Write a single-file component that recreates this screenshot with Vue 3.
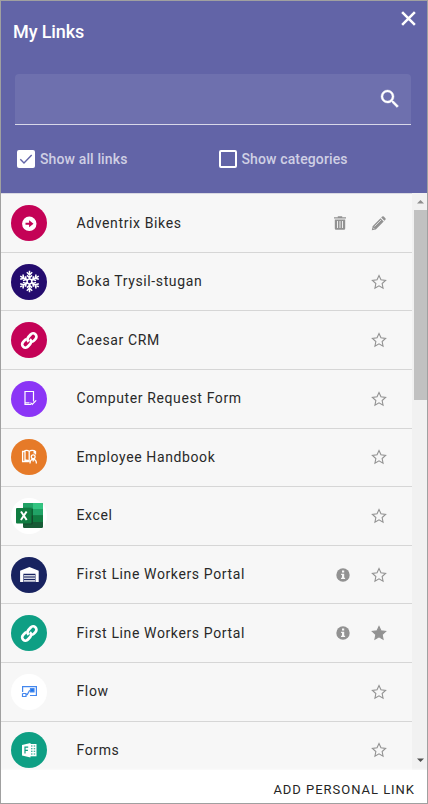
<script setup>
import { ref } from 'vue'

const query = ref('')
const links = [
  { name: 'Adventrix Bikes', icon: 'arrow', color: '#c40256', own: true },
  { name: 'Boka Trysil-stugan', icon: 'snow', color: '#240c6e' },
  { name: 'Caesar CRM', icon: 'chain', color: '#c40256' },
  { name: 'Computer Request Form', icon: 'request', color: '#8b35f6' },
  { name: 'Employee Handbook', icon: 'handbook', color: '#e67a28' },
  { name: 'Excel', icon: 'excel', color: '#ffffff' },
  { name: 'First Line Workers Portal', icon: 'garage', color: '#182360', info: true },
  { name: 'First Line Workers Portal', icon: 'chain', color: '#0e9f84', info: true, starred: true },
  { name: 'Flow', icon: 'flow', color: '#ffffff' },
  { name: 'Forms', icon: 'forms', color: '#0e9f84' },
]
</script>

<template>
  <div class="panel">
    <header class="header">
      <div class="title-row">
        <h1>My Links</h1>
        <svg class="close" viewBox="0 0 16 16"><path d="M2 2 14 14M14 2 2 14" /></svg>
      </div>
      <div class="search">
        <input v-model="query" type="text" />
        <svg viewBox="0 0 24 24"><path d="M15.5 14h-.79l-.28-.27A6.47 6.47 0 0 0 16 9.5 6.5 6.5 0 1 0 9.5 16c1.61 0 3.09-.59 4.23-1.57l.27.28v.79l5 4.99L20.49 19l-4.99-5zm-6 0C7.01 14 5 11.99 5 9.5S7.01 5 9.5 5 14 7.01 14 9.5 11.99 14 9.5 14z" /></svg>
      </div>
      <div class="options">
        <label><span class="box checked"><svg viewBox="0 0 18 18"><path d="M3.3 9.2 7 12.9 14.7 5" /></svg></span>Show all links</label>
        <label><span class="box"></span>Show categories</label>
      </div>
    </header>

    <main class="body">
      <ul class="list">
        <li v-for="(link, i) in links" :key="i">
          <span class="avatar" :style="{ background: link.color }">
            <svg viewBox="0 0 36 36">
              <g v-if="link.icon === 'arrow'">
                <circle cx="18.3" cy="18.8" r="7.2" fill="#fff" />
                <path d="M14.5 17.8h3.6v-2.5l4.4 3.500-4.400 3.500v-2.500h-3.600z" :fill="link.color" />
              </g>
              <g v-else-if="link.icon === 'snow'" fill="none" stroke="#fff" stroke-width="1.5">
                <g v-for="a in 6" :key="a" :transform="`rotate(${a * 60} 18.5 17.5)`">
                  <path d="M18.5 15V6.800M15.800 8.300l2.700 2.700 2.700-2.700M16 11.400l2.500 2.300 2.500-2.300" />
                </g>
                <circle cx="18.5" cy="17.5" r="2.4" />
              </g>
              <g v-else-if="link.icon === 'chain'" fill="none" stroke="#fff" stroke-width="2.7" transform="rotate(-48 18.3 18.5)">
                <path d="M17.500 15.800Q16.800 14.900 15.300 14.900h-2.400a3.300 3.300 0 0 0 0 6.600h3.400a3.300 3.300 0 0 0 3.300-3.300" />
                <path d="M19.100 21.200q.7.900 2.200.9h2.400a3.300 3.300 0 0 0 0-6.600h-3.400a3.300 3.300 0 0 0-3.300 3.300" />
              </g>
              <g v-else-if="link.icon === 'request'" fill="none" stroke="#fff" stroke-width="1.2">
                <path d="M20 23.500h-6V10.500h8.500v10M14 21.800h4.500M19.500 21.700l1.700 1.800 4-4.200" />
              </g>
              <g v-else-if="link.icon === 'handbook'" fill="none" stroke="#fff" stroke-width="1.3">
                <path d="M14 12.500h-2.400v10h6.200M14 11.600c2-.6 3.200-.2 4.200.8v9.800c-1.200-.9-2.400-1.200-4.200-.8zM18.200 12.400c1-1 2.800-1.300 5-.8v3M23.200 12.500h1.300v3" />
                <circle cx="22.2" cy="17.8" r="1.9" />
                <path d="M19 24.500c0-5.500 6.400-5.500 6.400 0M22.200 21v1.500" />
              </g>
              <g v-else-if="link.icon === 'excel'">
                <rect x="12" y="5" width="20" height="25" rx="1.2" fill="#185c37" />
                <path d="M12 6.200Q12 5 13.200 5H22v6H12z" fill="#21a366" />
                <path d="M22 5h8.800Q32 5 32 6.200V11H22z" fill="#33c481" />
                <path d="M12 11h10v6.500H12z" fill="#107c41" />
                <path d="M22 11h10v6.500H22z" fill="#21a366" />
                <path d="M22 17.500h10V24H22z" fill="#107c41" />
                <path d="M12 9.500h8.500q1.500 0 1.500 1.500v14q0 1.500-1.500 1.500H12z" fill="#000" opacity=".2" />
                <rect x="5" y="10" width="15.500" height="15.500" rx="1" fill="#107c41" />
                <path d="m10 13.500 5.700 8.500M15.600 13.500 9.900 22" fill="none" stroke="#fff" stroke-width="2" />
              </g>
              <g v-else-if="link.icon === 'garage'" fill="#fff">
                <path d="M9.100 25.100V13.800L18.400 10l9.300 3.800v11.300h-3.200V16.800H12.400v8.300z" />
                <path d="M13 18h11v1.500H13zM13 20.500h11V22H13zM13 23h11v1.700H13z" opacity=".8" />
              </g>
              <g v-else-if="link.icon === 'flow'" fill="none" stroke="#4387ee" stroke-width="1.2">
                <path d="M11.600 18v-5.400h13.800v8.900h-6.400M11.500 19.500v3h3.500v-3h-3.500M15 21.500c2.500 0 1.800-5.200 4.500-5.200" />
                <rect x="19.5" y="14.7" width="3.5" height="3.2" fill="#1976ee" />
              </g>
              <g v-else>
                <path d="M18.500 12h7v12.300h-7z" fill="#fff" />
                <path d="M20 14h1.500M22.700 14h1.500M20 16.700h1.500M22.700 16.700h1.500M20 19.300h1.500M22.700 19.300h1.500M20 22h1.500M22.700 22h1.500" :stroke="link.color" stroke-width="1.1" />
                <path d="m11 13 8.500-2v14.500L11 23.600z" fill="#fff" />
                <path d="M14 21.500v-6.400h3.200M14 18.300h2.900" fill="none" :stroke="link.color" stroke-width="1.2" />
              </g>
            </svg>
          </span>
          <span class="name">{{ link.name }}</span>
          <svg v-if="link.own" class="act trash" viewBox="0 0 16 16">
            <path d="M2 2.200h3.800V1.200h4.400v1H14v1.200H2zM2.800 4.500h10.400v9q0 1.200-1.200 1.200H4q-1.200 0-1.200-1.200z" />
            <path d="M5.500 6v7M8 6v7M10.500 6v7" stroke="#f7f7f7" stroke-width=".9" />
          </svg>
          <svg v-if="link.info" class="act info" viewBox="0 0 16 16">
            <circle cx="8" cy="8" r="6.7" />
            <path d="M7 3.600h2.200v1.900H7zM6.100 6.700h3.100v4h.9v1.400H6v-1.400h1V8.100h-.9z" fill="#f7f7f7" />
          </svg>
          <svg v-if="link.own" class="act" viewBox="0 0 16 16">
            <path d="m10.200 2.600 3.200 3.200 1-1q.8-.8 0-1.600l-1.600-1.600q-.8-.8-1.600 0zM9.500 3.300l3.200 3.200-7.900 7.900-4 .9.800-4.100z" />
            <path d="M3.500 11.500 10 5M2 12.700l1.500 1.500" fill="none" stroke="#f7f7f7" stroke-width=".7" />
          </svg>
          <svg v-else class="act star" :class="{ filled: link.starred }" viewBox="0 0 16 16">
            <path d="m8 1.600 1.950 4.250 4.650.55-3.450 3.150.9 4.600L8 11.850l-4.050 2.300.9-4.600L1.400 6.400l4.650-.55z" />
          </svg>
        </li>
      </ul>
      <div class="scrollbar">
        <svg viewBox="0 0 15 17"><path d="M5 10.500 8.500 7l3.500 3.500z" fill="#8d8d8d" /></svg>
        <span class="thumb"></span>
        <svg viewBox="0 0 15 17"><path d="M5 5.500h7L8.500 9z" fill="#505050" /></svg>
      </div>
    </main>

    <footer class="footer">ADD PERSONAL LINK</footer>
  </div>
</template>

<style>
body {
  overflow: hidden;
}
</style>

<style scoped>
.panel {
  box-sizing: border-box;
  width: 428px;
  height: 804px;
  display: flex;
  flex-direction: column;
  border: 1px solid #a0a0a0;
  background: #fff;
  font-family: Roboto, sans-serif;
  overflow: hidden;
}
.header {
  box-sizing: border-box;
  flex: none;
  height: 192px;
  padding: 8px 10px 0 12px;
  background: #6264a7;
  color: #fff;
}
.title-row {
  display: flex;
  justify-content: space-between;
  height: 65px;
}
h1 {
  margin: 12px 0 0;
  font-size: 18px;
  line-height: 22px;
  font-weight: 500;
  letter-spacing: -.1px;
}
.close {
  width: 17px;
  height: 17px;
  margin-top: .5px;
  fill: none;
  stroke: #fff;
  stroke-width: 2.4;
}
.search {
  box-sizing: border-box;
  display: flex;
  align-items: center;
  width: 396px;
  height: 51px;
  margin-left: 2px;
  padding-right: 9.5px;
  border-bottom: 1px solid #d8d8e9;
  border-radius: 4px 4px 0 0;
  background: #6e70ae;
}
.search input {
  flex: 1;
  min-width: 0;
  border: 0;
  outline: 0;
  background: transparent;
  color: #fff;
}
.search svg {
  width: 24px;
  height: 24px;
  fill: #fff;
  stroke: #fff;
  stroke-width: .4;
}
.options {
  display: grid;
  grid-template-columns: 201.5px 1fr;
  padding: 25px 0 0 4px;
}
label {
  display: flex;
  align-items: center;
  gap: 5px;
  height: 18px;
  font-size: 14px;
  font-weight: 500;
  letter-spacing: .13px;
  color: #cfcfe4;
}
.box {
  box-sizing: border-box;
  width: 18px;
  height: 18px;
  border: 2px solid #fff;
  border-radius: 2px;
}
.checked {
  border: 0;
  background: #fff;
}
.checked svg {
  display: block;
  fill: none;
  stroke: #6264a7;
  stroke-width: 1.4;
}
.body {
  flex: none;
  display: flex;
  height: 577px;
  background: #f7f7f7;
  overflow: hidden;
}
.list {
  flex: 1;
  margin: 0;
  padding: .3px 0 0;
  list-style: none;
  border-top: 1px solid #d9d9e2;
}
li {
  box-sizing: border-box;
  display: flex;
  align-items: center;
  height: 58.58px;
  padding: 0 25px 0 10px;
  border-bottom: 1px solid #d6d6d6;
}
.avatar {
  width: 36px;
  height: 36px;
  border-radius: 50%;
}
.avatar svg {
  display: block;
  width: 36px;
  height: 36px;
}
.name {
  flex: 1;
  margin: 0 0 1px 29.5px;
  font-size: 14px;
  line-height: 20px;
  letter-spacing: .62px;
  color: #292929;
}
.act {
  width: 16px;
  height: 16px;
  fill: #929292;
}
.trash {
  margin-right: 23px;
}
.info {
  margin-right: 20px;
}
.star {
  stroke: #929292;
  stroke-width: 1.1;
  fill: none;
}
.filled {
  fill: #929292;
}
.scrollbar {
  display: flex;
  flex-direction: column;
  width: 15px;
  background: #f1f1f1;
}
.scrollbar svg {
  width: 15px;
  height: 17px;
}
.thumb {
  height: 190px;
  margin: 0 0 auto 2px;
  background: #c1c1c1;
}
.footer {
  position: relative;
  flex: 1;
  padding: 10px 12px 0 0;
  background: #fff;
  box-shadow: 0 0 3px rgba(255, 255, 255, .9);
  text-align: right;
  font-size: 13px;
  line-height: 19px;
  letter-spacing: .97px;
  color: #252525;
}
</style>
